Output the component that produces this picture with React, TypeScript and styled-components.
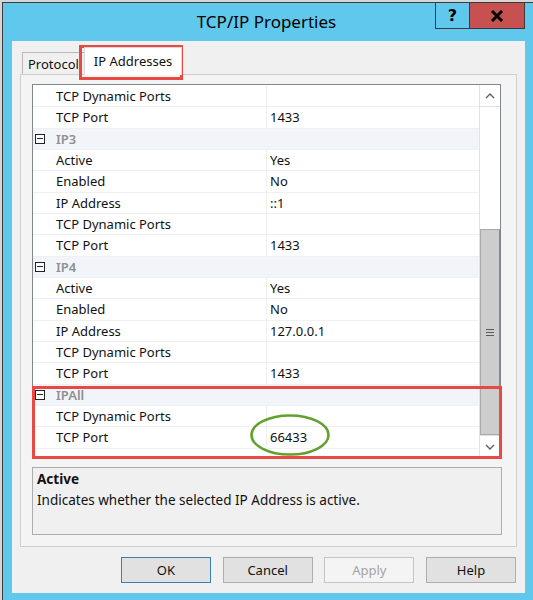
import React, { FC } from 'react'
import styled, { createGlobalStyle } from 'styled-components'

const GlobalStyle = createGlobalStyle`
  html, body {
    margin: 0;
    padding: 0;
    overflow: hidden;
    background: #d6d6d6;
  }
  body {
    font-family: "Noto Sans", "Open Sans", "Liberation Sans", sans-serif;
    color: #111;
  }
`

type Item =
  | { kind: 'cat'; name: string }
  | { kind: 'prop'; name: string; value: string }

const items: Item[] = [
  { kind: 'prop', name: 'TCP Dynamic Ports', value: '' },
  { kind: 'prop', name: 'TCP Port', value: '1433' },
  { kind: 'cat', name: 'IP3' },
  { kind: 'prop', name: 'Active', value: 'Yes' },
  { kind: 'prop', name: 'Enabled', value: 'No' },
  { kind: 'prop', name: 'IP Address', value: '::1' },
  { kind: 'prop', name: 'TCP Dynamic Ports', value: '' },
  { kind: 'prop', name: 'TCP Port', value: '1433' },
  { kind: 'cat', name: 'IP4' },
  { kind: 'prop', name: 'Active', value: 'Yes' },
  { kind: 'prop', name: 'Enabled', value: 'No' },
  { kind: 'prop', name: 'IP Address', value: '127.0.0.1' },
  { kind: 'prop', name: 'TCP Dynamic Ports', value: '' },
  { kind: 'prop', name: 'TCP Port', value: '1433' },
  { kind: 'cat', name: 'IPAll' },
  { kind: 'prop', name: 'TCP Dynamic Ports', value: '' },
  { kind: 'prop', name: 'TCP Port', value: '66433' },
]

const Chevron: FC<{ up?: boolean }> = ({ up }) => (
  <svg width="10" height="6" viewBox="0 0 10 6">
    <polyline
      points={up ? '1,5 5,1 9,5' : '1,1 5,5 9,1'}
      fill="none"
      stroke="#606060"
      strokeWidth="1.4"
    />
  </svg>
)

const CloseGlyph = () => (
  <svg width="14" height="12" viewBox="0 0 14 12">
    <path d="M2 1 L12 11 M12 1 L2 11" stroke="#000" strokeWidth="3" />
  </svg>
)

const App: FC = () => {
  return (
    <Root>
      <GlobalStyle />
      <Window>
        <TitleBar>
          <span />
          <Title>TCP/IP Properties</Title>
          <Captions>
            <HelpButton>?</HelpButton>
            <CloseButton>
              <CloseGlyph />
            </CloseButton>
          </Captions>
        </TitleBar>
        <Client>
          <TabArea>
            <TabStrip>
              <Tab>Protocol</Tab>
              <Tab active>IP Addresses</Tab>
            </TabStrip>
            <TabPage>
              <Grid>
                <Rows>
                  {items.map((it, i) =>
                    it.kind === 'cat' ? (
                      <CatRow key={i}>
                        <Margin>
                          <MinusBox />
                        </Margin>
                        <CatName>{it.name}</CatName>
                      </CatRow>
                    ) : (
                      <PropRow key={i}>
                        <Margin />
                        <NameCell>{it.name}</NameCell>
                        <ValueCell>{it.value}</ValueCell>
                      </PropRow>
                    )
                  )}
                </Rows>
                <ScrollBar>
                  <ArrowBox>
                    <Chevron up />
                  </ArrowBox>
                  <Track />
                  <Thumb>
                    <Grip>
                      <i />
                      <i />
                      <i />
                    </Grip>
                  </Thumb>
                  <ArrowBox>
                    <Chevron />
                  </ArrowBox>
                </ScrollBar>
              </Grid>
              <Description>
                <DescTitle>Active</DescTitle>
                <DescText>Indicates whether the selected IP Address is active.</DescText>
              </Description>
            </TabPage>
          </TabArea>
          <ButtonRow>
            <DialogButton primary>OK</DialogButton>
            <DialogButton>Cancel</DialogButton>
            <DialogButton disabled>Apply</DialogButton>
            <DialogButton>Help</DialogButton>
          </ButtonRow>
        </Client>
      </Window>

      <Highlight style={{ left: 79, top: 45, width: 104, height: 35 }} />
      <Highlight style={{ left: 32, top: 386, width: 470, height: 73 }} />
      <Ring width="82" height="44" viewBox="0 0 82 44">
        <ellipse cx="41" cy="22" rx="38.5" ry="19.5" fill="none" stroke="#62a12e" strokeWidth="2.6" />
      </Ring>
    </Root>
  )
}

export default App

const Root = styled.div`
  position: relative;
  width: 533px;
  height: 600px;
  overflow: hidden;
`

const Window = styled.div`
  margin: 2px 0 0 2px;
  width: 533px;
  height: 600px;
  background: #5fc8ec;
  border-left: 1px solid #3c3c3c;
  border-top: 1px solid #3c3c3c;
  display: flex;
  flex-direction: column;
`

const TitleBar = styled.div`
  height: 38px;
  display: grid;
  grid-template-columns: 1fr auto 1fr;
`

const Title = styled.div`
  font-size: 17px;
  line-height: 38px;
  color: #000;
  padding-right: 6px;
`

const Captions = styled.div`
  justify-self: end;
  align-self: start;
  display: flex;
  margin-top: -1px;
  margin-right: 11px;
`

const HelpButton = styled.div`
  width: 33px;
  height: 25px;
  border: 1px solid #3a3a3a;
  border-right: none;
  display: flex;
  align-items: center;
  justify-content: center;
  font-family: "DejaVu Sans", sans-serif;
  font-weight: bold;
  font-size: 16px;
  color: #000;
`

const CloseButton = styled.div`
  width: 54px;
  height: 25px;
  background: #c75050;
  border: 1px solid #3a3a3a;
  display: flex;
  align-items: center;
  justify-content: center;
`

const Client = styled.div`
  margin-left: 9px;
  width: 513px;
  height: 552px;
  background: #f0f0f0;
  display: flex;
  flex-direction: column;
`

const TabArea = styled.div`
  margin: 6px 0 0 8px;
  width: 497px;
  display: flex;
  flex-direction: column;
`

const TabStrip = styled.div`
  height: 27px;
  display: flex;
  align-items: flex-end;
  padding-left: 2px;
`

const Tab = styled.div<{ active?: boolean }>`
  position: relative;
  z-index: ${({ active }) => (active ? 1 : 0)};
  height: ${({ active }) => (active ? '27px' : '21px')};
  margin-bottom: ${({ active }) => (active ? '-1px' : '0')};
  padding: 0 ${({ active }) => (active ? '9px' : '5px')};
  background: ${({ active }) => (active ? '#ffffff' : '#f0f0f0')};
  border: 1px solid ${({ active }) => (active ? '#d9d9d9' : '#b9b9b9')};
  border-bottom: none;
  margin-left: ${({ active }) => (active ? '-1px' : '0')};
  font-size: 13px;
  line-height: ${({ active }) => (active ? '26px' : '22px')};
  color: #111;
  white-space: nowrap;
`

const TabPage = styled.div`
  height: 462px;
  border: 1px solid #cfcfcf;
  background: #f4f4f4;
  padding: 9px 0 0 11px;
  display: flex;
  flex-direction: column;
`

const Grid = styled.div`
  width: 467px;
  height: 372px;
  border: 1px solid #82868d;
  background: #fff;
  display: flex;
`

const Rows = styled.div`
  flex: 1;
  padding-top: 1px;
  overflow: hidden;
`

const rowBase = `
  height: 21.33px;
  box-sizing: border-box;
  display: flex;
  align-items: center;
  font-size: 13px;
  border-bottom: 1px solid #f0f0f0;
`

const PropRow = styled.div`
  ${rowBase}
  background: #fff;
`

const CatRow = styled.div`
  ${rowBase}
  background: #f1f5fa;
  border-bottom-color: #eef2f7;
`

const Margin = styled.div`
  width: 18px;
  height: 100%;
  flex: none;
  display: flex;
  align-items: center;
`

const MinusBox = styled.div`
  position: relative;
  width: 8px;
  height: 8px;
  margin-left: 2px;
  border: 1px solid #222;
  background: #fff;
  &::after {
    content: '';
    position: absolute;
    left: 1px;
    right: 1px;
    top: 3.5px;
    height: 1px;
    background: #222;
  }
`

const NameCell = styled.div`
  width: 215px;
  flex: none;
  padding-left: 5px;
  box-sizing: border-box;
  white-space: nowrap;
  color: #111;
`

const ValueCell = styled.div`
  flex: 1;
  height: 100%;
  display: flex;
  align-items: center;
  padding-left: 3px;
  border-left: 1px solid #f0f0f0;
  color: #111;
`

const CatName = styled.div`
  padding-left: 5px;
  font-weight: 600;
  color: #8f8f8f;
`

const ScrollBar = styled.div`
  width: 20px;
  flex: none;
  display: flex;
  flex-direction: column;
  border-left: 1px solid #e3e3e3;
  background: #fff;
`

const ArrowBox = styled.div`
  height: 21px;
  flex: none;
  display: flex;
  align-items: center;
  justify-content: center;
  background: #fff;
  border-bottom: 1px solid #e0e0e0;
  &:last-child {
    border-bottom: none;
    border-top: 1px solid #e0e0e0;
  }
`

const Track = styled.div`
  height: 122px;
  flex: none;
  background: #fff;
`

const Thumb = styled.div`
  flex: 1;
  background: #cdcdcd;
  border: 1px solid #a9a9a9;
  border-right-color: #8a8a8a;
  display: flex;
  align-items: center;
  justify-content: center;
`

const Grip = styled.div`
  display: flex;
  flex-direction: column;
  gap: 2px;
  i {
    display: block;
    width: 8px;
    height: 1px;
    background: #5a5a5a;
  }
`

const Description = styled.div`
  margin-top: 9px;
  width: 460px;
  height: 62px;
  border: 1px solid #adadad;
  background: #f0f0f0;
  padding: 2px 4px;
`

const DescTitle = styled.div`
  font-size: 13.5px;
  font-weight: bold;
  line-height: 19px;
  color: #111;
`

const DescText = styled.div`
  font-size: 13.5px;
  line-height: 22px;
  color: #111;
`

const ButtonRow = styled.div`
  margin-top: 10px;
  display: flex;
  justify-content: flex-end;
  gap: 11.7px;
  padding-right: 9px;
`

const DialogButton = styled.button<{ primary?: boolean }>`
  width: 90px;
  height: 26px;
  font-family: "Noto Sans", "Open Sans", "Liberation Sans", sans-serif;
  font-size: 13px;
  color: #111;
  background: #e1e1e1;
  border: 1px solid ${({ primary }) => (primary ? '#3c7fb1' : '#adadad')};
  padding: 0;
  &:disabled {
    background: #f4f4f4;
    border-color: #c4c4c4;
    color: #a3a3a3;
  }
`

const Highlight = styled.div`
  position: absolute;
  box-sizing: border-box;
  border: 3px solid #e84a43;
  pointer-events: none;
`

const Ring = styled.svg`
  position: absolute;
  left: 249px;
  top: 413px;
  pointer-events: none;
`
